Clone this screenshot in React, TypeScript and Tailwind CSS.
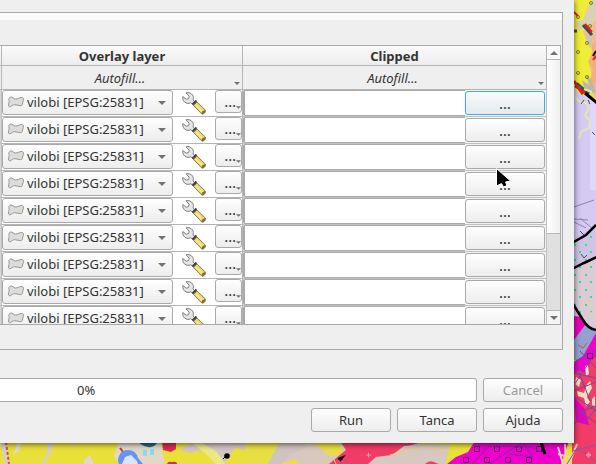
import React from "react";

const ROWS = Array.from({ length: 9 }, (_, i) => i);

const BUTTON_BASE = "rounded-[3px] border bg-linear-to-b text-center";
const BUTTON = `${BUTTON_BASE} border-[#a9a9a9] from-[#fefefe] to-[#ededed]`;
const BUTTON_FOCUSED = `${BUTTON_BASE} border-[#3daee9] from-[#fafafa] to-[#e4eaed]`;

function Arrow({ up = false, className = "" }: { up?: boolean; className?: string }) {
  return (
    <svg viewBox="0 0 8 4" className={`fill-[#727272] ${className}`} aria-hidden="true">
      <path d={up ? "M0 4 4 0 8 4Z" : "M0 0h8L4 4Z"} />
    </svg>
  );
}

function PolygonIcon() {
  return (
    <svg viewBox="0 0 16 12" className="h-3 w-4 shrink-0" aria-hidden="true">
      <path
        d="M2.500 1C1 1.500.5 3 1 4.500 1.500 6 .5 7.500.5 9c0 1.500 1 2.300 2.300 1.600C4.300 9.600 5 8.700 6.500 8.700c2 0 4.200.9 6.200 1 1.300 0 1.600-1 1.900-2.600.3-1.700 1.100-2.800.8-4.300C15.100 1.500 14.200 1.300 13 1.500 11 1.900 9.500 3 7.500 3 5.500 3 4.500.6 2.500 1Z"
        fill="#dcdcdc"
        stroke="#959595"
        strokeWidth="1"
      />
    </svg>
  );
}

function WrenchIcon() {
  return (
    <svg viewBox="0 0 24 23" className="h-[23px] w-6" aria-hidden="true">
      <path
        d="M4 .8 7.200 4.200 6.600 6.500 4.200 7.200.8 4.500C.3 7.500 1.800 10.400 4.800 11.200c1.700.4 2.900 0 4-.5l3.400 3.300 2.300-2.500-3.500-3.600c.6-1.700.6-3.200-.4-4.800C9.200 1.100 6.600 0 4 .8Z"
        fill="#e3e5e6"
        stroke="#7c7f80"
        strokeWidth="1"
      />
      <path d="m10.500 12.500 4-4" fill="none" stroke="#3b3e3b" strokeWidth="2" />
      <path
        d="m11.500 13.500 3.500-3.500 8.500 8.200c.4 1.800-1.500 4-3.500 4Z"
        fill="#ead573"
        stroke="#8d7f47"
        strokeWidth="1"
      />
      <path d="m14 13 7 7" stroke="#fbe99a" strokeWidth="1.500" />
      <path d="m19.500 22 .5-2.500 3-1.500.5 2-2 2Z" fill="#7d6f37" />
    </svg>
  );
}

function MapCanvas() {
  return (
    <svg
      viewBox="0 0 596 464"
      preserveAspectRatio="xMaxYMax slice"
      className="absolute inset-0 -z-10 size-full"
      aria-hidden="true"
    >
      <defs>
        <pattern id="greenDots" width="11" height="15" patternUnits="userSpaceOnUse">
          <rect x="2" y="4" width="2" height="2" fill="#2fe57c" />
          <rect x="7" y="11" width="2" height="2" fill="#2fe57c" />
        </pattern>
      </defs>
      <rect width="596" height="464" fill="#e9e03a" />
      {/* right strip */}
      <rect x="570" width="26" height="95" fill="#eeee38" />
      <path d="M596 5 588 12 590 24 583 31 587 42 592 50 589 64 592 76 587 84 590 92 596 96Z" fill="#ecc092" />
      <path d="M596 0h-4l-5 8-4 12-8 2 4 8 10-2 8-10Z" fill="#d8d1b4" />
      <path d="m592 44 4-4v45l-6-5 3-10-5-8 4-8Z" fill="#f4b077" />
      <path d="m582 80 8 6-4-10 6 4 4 12-10 2Z" fill="#bdb5ad" />
      <path d="m588 26 5 14-3 8-4-10Z" fill="#cfc2bd" />
      <path d="m593 56 3-5" stroke="#111" strokeWidth="2" />
      <path d="m593 60 3-4" stroke="#e2211c" strokeWidth="2" />
      <g fill="none" stroke="#807b21" strokeWidth="1">
        <circle cx="591" cy="3" r="1.500" />
        <circle cx="578" cy="17" r="1.500" />
        <circle cx="590" cy="26" r="1.500" />
        <circle cx="578" cy="52" r="1.500" />
        <circle cx="587" cy="43" r="1.500" />
        <circle cx="578" cy="73" r="1.500" />
        <circle cx="587" cy="77" r="1.500" />
      </g>
      <path d="M574 31l3 0M583 25l9 10M575 86l9 5 5 3" fill="none" stroke="#444a4c" strokeWidth="3" />
      <path d="M574 12l4 4M585 24l7 8" fill="none" stroke="#e2211c" strokeWidth="2" />
      <path d="M572 84 580 95 586 95 596 103V270H570Z" fill="#d5caf2" />
      <path d="M596 102V190h-6V98Z" fill="#dfd8fa" />
      <path d="M574 81l8 12 4-2" stroke="#e2211c" strokeWidth="3" fill="none" />
      <path d="m577 83 7 6 4 4" stroke="#444a4c" strokeWidth="2" fill="none" />
      <path d="M585 93 597 103" stroke="#000" strokeWidth="3" />
      <path
        d="m575 97 6 6 5-1 3 6-4 8 5 4-1 8-8 4-2 7M592 92l-8-3"
        fill="none"
        stroke="#e1e6b4"
        strokeWidth="2"
      />
      <path d="m581 104 3-4M588 100l2 4M592 132l3 3" stroke="#514757" strokeWidth="1" />
      <path d="m574 207 20-7M574 219l14 1M574 222l12 6M580 218l14 12" stroke="#8e88ab" strokeWidth="1" fill="none" />
      <path d="M570 240 596 226V345H570Z" fill="#cfc3e6" />
      <path d="M574 268 596 256V326L586 327 574 306Z" fill="#dccbd7" />
      <path d="M574 244 596 226V316H574Z" fill="url(#greenDots)" />
      <path d="M574 316l8 1 6 10-9 18-5-1Z" fill="#ea00b8" />
      <path d="M574 340 585 325 596 332V360H574Z" fill="#96a0d0" />
      <path
        d="m572 243 14-8 10-10M572 269l12-6 13-6M573 304l10 16q6 10 14 10"
        fill="none"
        stroke="#000"
        strokeWidth="2.500"
      />
      <path d="m580 231 4 4M581 254l3 4 3-3" stroke="#50485c" fill="none" />
      <path d="m583 306 5-5 5 5M588 311l8 4" stroke="#e4df68" fill="none" />
      <path d="M572 364 583 356 596 333V464H572Z" fill="#f100cd" />
      <path d="M572 376 579 370 586 374 591 360 596 357V464H572Z" fill="#f03c67" />
      <path d="M574 397 585 409 589 425 576 422Z" fill="#e800bd" />
      <path
        d="m576 377 5 3-2 7-4-3ZM585 366l3-1 1 9-3 2ZM587 384l3-3 2 7-5 9 3 5-4 4-2-8-6-2-1-5 7 2ZM592 399l3-3v10l-3-1Z"
        fill="#f5dfc2"
      />
      <g fill="none" stroke="#734aa0" strokeWidth="1">
        <path d="m574 362 22-13M574 373l22 5M574 391l22-9M574 396l22 15M576 364l14 37M579 413l17-7M574 407l22 16" />
        <path d="m574 424 15-18M580 351l16 17M574 385l18-27M583 424l13-15" />
      </g>
      <path d="m578 345 5 3 4-5" stroke="#b6642a" fill="none" />
      <rect x="587.500" y="353.500" width="5" height="5" fill="none" stroke="#50005c" />
      {/* bottom strip */}
      <path d="M48 441h7l-4 11-6 12h-3l5-11Z M0 441h5l5 23H5Z M72 441h5l-3 6Z" fill="#d9cfc2" />
      <path d="M6 442 9 464" stroke="#bf5b45" strokeWidth="2" strokeDasharray="3 2" />
      <path d="M119 441 114 456 119 464H165L160 441Z M18 441h4l-3 10-6 4Z M84 460l6-5 4 9H84Z" fill="#e1d8c8" />
      <path d="M138 441h20q-3 7-10 6t-10-6Z" fill="#246b86" />
      <path d="M143 450h4v6h-4zM150 449h4v6h-4z" fill="#8bdce4" />
      <path d="M162 441h14v8l-5 3-8-2zM167 464q1-3 5-2 5-1 5 2Z" fill="#d92e53" />
      <path d="m120 448 4 5" stroke="#c0392b" strokeWidth="2" />
      <path d="m119 456q2-6 9-6 8 0 10 8l5 6h-24q-2-4 0-8Z" fill="#6793f4" />
      <path d="m125 457 6-2 6 6 1 3h-16Z" fill="#d9e5fb" />
      <path d="M180 450 194 441H260L248 452 236 447 224 463 213 454 201 450 190 453Z" fill="#d5c5c5" />
      <path d="M190 441h9l18 11 8 12h-9l-10-10Z" fill="#ece883" />
      <path d="m223 459 5-5" stroke="#111" strokeWidth="1" />
      <circle cx="227" cy="456" r="2.800" fill="#050505" />
      <path d="M272 445l28-4h50l100 4-5 19H300l-5-5-10 4Z" fill="#d7c8c1" />
      <path d="M245 441h35l5 5-8 13 6 5h-38Z" fill="#e7df43" />
      <path d="M280 441h28l-4 8-13 5-9 10h-14Z" fill="#d1c3c0" />
      <path d="M312 441h20l11 6-2 8-12 1Z" fill="#e9df43" />
      <path
        d="m340 441h82q-9 5-18 5l-12 9-16 2-8 7h-39l12-10 5-4ZM425 464q5-5 11-1l3 1Z"
        fill="#f03c67"
      />
      <path d="m304 444 26 7 6 13M310 455l20 6M390 455l34-8 28 4" fill="none" stroke="#efd07a" strokeWidth="1" />
      <path d="m338 459 5-2-3 4" fill="none" stroke="#111" strokeWidth="2" />
      <path d="M366 455h5M368.500 452.500v5" stroke="#ff91a5" />
      <path d="M475 441h94l-8 23H447l9-7 12-5Z" fill="#f100cd" />
      <g fill="none" stroke="#60005d" strokeWidth="1">
        <path d="M474.500 446.500h5v5h-5zM494.500 446.500h5v5h-5zM516.500 446.500h5v5h-5zM536.500 446.500h5v5h-5zM463.500 457.500h5v5h-5zM484.500 457.500h5v5h-5zM505.500 457.500h5v5h-5zM526.500 457.500h5v5h-5z" />
      </g>
      <path d="m472 464 17-18 42 1 20 10M489 464l34-22 10 15-24-3" fill="none" stroke="#812ca5" />
      <path d="m541 442 4 12" stroke="#000" strokeWidth="3" />
      <path d="m563 464-5-17M566 464l-1-20M569 464l8-20M558 454l14 4" stroke="#eed3b2" fill="none" strokeWidth="2" />
      <path d="m573 451 23-6M567 464l10-16 19 13" stroke="#9250a0" fill="none" />
      <path d="M586 455h5M588.500 452.500v5" stroke="#ff91a5" strokeWidth="2" />
    </svg>
  );
}

export default function App() {
  return (
    <div className="relative isolate min-h-screen overflow-hidden font-['Noto_Sans','Open_Sans',sans-serif] text-[13px] leading-4 text-[#333]">
      <MapCanvas />
      <main className="mr-[22px] bg-[#efefef] pt-3 pr-[11px] pb-[11px] shadow-[0_1px_6px_rgba(0,0,0,0.65)]">
        <section className="border-y border-r border-[#a9a9a9] pb-6">
          <div className="h-[7px] bg-[#fcfcfc]" />
          <div className="mt-[25px] mr-px flex h-[280px] border-y border-r border-[#a9a9a9]">
            <div className="min-w-0 flex-1 overflow-hidden bg-white">
              <table className="w-full table-fixed border-separate border-spacing-0">
                <colgroup>
                  <col className="w-0.5" />
                  <col className="w-[241px]" />
                  <col />
                </colgroup>
                <thead>
                  <tr className="h-5 bg-linear-to-b from-[#fbfbfb] to-[#ececec]">
                    <td className="border-r border-b border-[#b5b5b5] p-0" />
                    <th scope="col" className="border-r border-b border-[#b5b5b5] p-0 font-bold">
                      Overlay layer
                    </th>
                    <th scope="col" className="border-r border-b border-[#b5b5b5] p-0 font-bold">
                      Clipped
                    </th>
                  </tr>
                </thead>
                <tbody>
                  <tr className="h-6 bg-[#efefef]">
                    <td className="border-r border-b border-[#b5b5b5] p-0" />
                    {["Overlay layer", "Clipped"].map((name) => (
                      <td key={name} className="border-r border-b border-[#b5b5b5] p-0">
                        <button
                          type="button"
                          aria-label={`Autofill ${name}`}
                          className="flex h-[23px] w-full items-end pr-0.5 pb-[3px] italic"
                        >
                          <span className="flex-1 pl-1">Autofill…</span>
                          <Arrow className="mb-px h-[3px] w-[6px]" />
                        </button>
                      </td>
                    ))}
                  </tr>
                  {ROWS.map((row) => (
                    <tr key={row} className="h-[27px]">
                      <td className="border-r border-b border-[#c0c0c0] bg-[#d5d5d5] p-0" />
                      <td className="border-r border-b border-[#b5b5b5] p-0">
                        <div className="flex h-[26px] items-start">
                          <div className={`${BUTTON} relative flex h-[25px] w-[171px] items-center pb-0.5 pl-[5px]`}>
                            <PolygonIcon />
                            <select
                              aria-label={`Overlay layer ${row + 1}`}
                              className="ml-[3px] h-[21px] min-w-0 flex-1 appearance-none bg-transparent outline-none"
                            >
                              <option>vilobi [EPSG:25831]</option>
                            </select>
                            <Arrow className="pointer-events-none absolute top-[10px] right-[6px] h-1 w-2" />
                          </div>
                          <button type="button" aria-label="Advanced options" className="ml-[9px] h-[25px] w-6 pt-px">
                            <WrenchIcon />
                          </button>
                          <button
                            type="button"
                            aria-label="Layer source"
                            className={`${BUTTON} ml-auto flex h-[23px] w-[27px] items-end justify-end pb-[3px]`}
                          >
                            <span className="text-[15px]">…</span>
                            <Arrow className="h-[3px] w-[5px]" />
                          </button>
                        </div>
                      </td>
                      <td className="border-r border-b border-[#c0c0c0] bg-[#f3f3f3] p-0">
                        <div className="flex h-[26px] items-center">
                          <input
                            type="text"
                            aria-label={`Clipped output ${row + 1}`}
                            className="h-[26px] min-w-0 flex-1 rounded-l-[2px] border-y border-l-2 border-[#a9a9a9] bg-white px-1 outline-none"
                          />
                          <button
                            type="button"
                            aria-label="Choose output"
                            className={`${row === 0 ? BUTTON_FOCUSED : BUTTON} mr-px h-6 w-20 text-[15px]`}
                          >
                            …
                          </button>
                        </div>
                      </td>
                    </tr>
                  ))}
                </tbody>
              </table>
            </div>
            <div className="flex w-[13px] flex-col bg-[#e0e0e0]">
              <button
                type="button"
                aria-label="Scroll up"
                className="flex h-[14px] items-center justify-center border-b border-[#b5b5b5] bg-[#fafafa]"
              >
                <Arrow up className="h-1 w-2" />
              </button>
              <div className="h-[174px] border-b border-[#b5b5b5] bg-linear-to-r from-[#fff] to-[#f0f0f0]" />
              <button
                type="button"
                aria-label="Scroll down"
                className="mt-auto flex h-[14px] items-center justify-center border-t border-[#b5b5b5] bg-[#f5f5f5]"
              >
                <Arrow className="h-1 w-2" />
              </button>
            </div>
          </div>
        </section>
        <div className="mt-7 flex gap-1.5">
          <div
            role="progressbar"
            aria-label="Progress"
            aria-valuenow={0}
            className="h-6 flex-1 rounded-r-[3px] border-y border-r border-[#a9a9a9] bg-white pt-[3px] pl-[77px]"
          >
            0%
          </div>
          <button type="button" disabled className={`${BUTTON} h-6 w-20 text-[#9a9a9a]`}>
            Cancel
          </button>
        </div>
        <div className="mt-1.5 flex justify-end gap-1.5">
          {["Run", "Tanca", "Ajuda"].map((label) => (
            <button key={label} type="button" className={`${BUTTON} h-6 w-20`}>
              {label}
            </button>
          ))}
        </div>
      </main>
      <svg viewBox="0 0 18 22" className="absolute top-[167px] left-[494px] h-[22px] w-[18px]" aria-hidden="true">
        <path d="M2.500 1.500V19l5-2.500 2 3.500 3.500-1.500-1.500-3.500L16.500 14Z" fill="#000" stroke="#fff" strokeWidth="1" />
      </svg>
    </div>
  );
}
